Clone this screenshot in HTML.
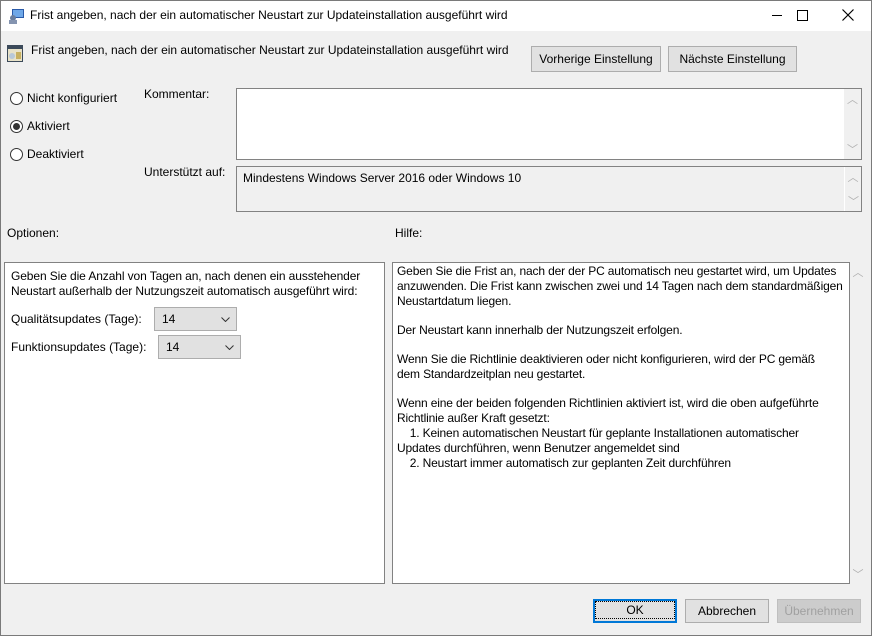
<!DOCTYPE html>
<html><head><meta charset="utf-8"><style>
*{box-sizing:border-box;margin:0;padding:0}
body{width:872px;height:636px;background:#f0f0f0;font-family:"Liberation Sans",sans-serif;font-size:12px;color:#000;position:relative;overflow:hidden}
.frame{position:absolute;left:0;top:0;width:872px;height:636px;border:1px solid #7a7a7a;pointer-events:none}
.a{position:absolute}
.title{left:0;top:0;width:872px;height:31px;background:#fff}
.btn{position:absolute;background:#e1e1e1;border:1px solid #adadad;text-align:center;line-height:24px;font-size:12px}
.box{position:absolute;border:1px solid #828282;background:#fff}
.sb{position:absolute;right:0;top:0;bottom:0;width:17px;background:#f0f0f0;color:#b0b0b0;font-size:11px;text-align:center}
.radio{position:absolute;width:13px;height:13px;border:1px solid #333;border-radius:50%;background:#fff}
.combo{position:absolute;height:24px;background:#e1e1e1;border:1px solid #adadad;padding-left:7px;line-height:22px}
.help div{line-height:15px;white-space:nowrap;letter-spacing:-0.15px}
</style></head><body>
<div class="a title"></div>
<svg class="a" style="left:8px;top:8px" width="17" height="16"><rect x="4" y="1" width="12" height="9" fill="#2a5aa8"/><rect x="5" y="2" width="10" height="7" fill="#6fa8e8"/><circle cx="5" cy="10" r="3" fill="#6a7fa0"/><rect x="1" y="12" width="8" height="4" fill="#8494b0"/></svg>
<div class="a" style="left:30px;top:8px">Frist angeben, nach der ein automatischer Neustart zur Updateinstallation ausgeführt wird</div>
<div class="a" style="left:772px;top:15px;width:10px;height:1px;background:#000"></div>
<div class="a" style="left:797px;top:10px;width:11px;height:11px;border:1px solid #000"></div>
<svg class="a" style="left:842px;top:9px" width="12" height="12"><path d="M0.5 0.5L11.5 11.5M11.5 0.5L0.5 11.5" stroke="#000" stroke-width="1.2"/></svg>
<svg class="a" style="left:7px;top:45px" width="16" height="17"><rect x="0" y="0" width="16" height="17" fill="#3c4a5a"/><rect x="1" y="4" width="14" height="12" fill="#e8e2c8"/><circle cx="5" cy="11" r="3" fill="#b8c8d8"/><rect x="9" y="7" width="5" height="7" fill="#c8b060"/></svg>
<div class="a" style="left:31px;top:43px">Frist angeben, nach der ein automatischer Neustart zur Updateinstallation ausgeführt wird</div>
<div class="btn" style="left:531px;top:46px;width:130px;height:26px">Vorherige Einstellung</div>
<div class="btn" style="left:668px;top:46px;width:129px;height:26px">Nächste Einstellung</div>
<div class="radio" style="left:10px;top:92px"></div>
<div class="a" style="left:27px;top:91px">Nicht konfiguriert</div>
<div class="radio" style="left:10px;top:120px"><div style="position:absolute;left:2px;top:2px;width:7px;height:7px;border-radius:50%;background:#333"></div></div>
<div class="a" style="left:27px;top:119px">Aktiviert</div>
<div class="radio" style="left:10px;top:148px"></div>
<div class="a" style="left:27px;top:147px">Deaktiviert</div>
<div class="a" style="left:144px;top:87px">Kommentar:</div>
<div class="box" style="left:236px;top:88px;width:626px;height:72px"><div class="sb"><div style="margin-top:2px">︿</div><div style="position:absolute;bottom:2px;width:17px">﹀</div></div></div>
<div class="a" style="left:144px;top:165px">Unterstützt auf:</div>
<div class="box" style="left:236px;top:166px;width:626px;height:46px;background:#f0f0f0"><div style="position:absolute;left:6px;top:4px">Mindestens Windows Server 2016 oder Windows 10</div><div class="sb" style="border-left:1px solid #fff"><div style="margin-top:2px">︿</div><div style="position:absolute;bottom:2px;width:17px">﹀</div></div></div>
<div class="a" style="left:7px;top:226px">Optionen:</div>
<div class="a" style="left:395px;top:226px">Hilfe:</div>
<div class="box" style="left:4px;top:262px;width:381px;height:322px">
<div style="position:absolute;left:6px;top:6px;line-height:15px;white-space:nowrap;letter-spacing:-0.1px">Geben Sie die Anzahl von Tagen an, nach denen ein ausstehender<br>Neustart außerhalb der Nutzungszeit automatisch ausgeführt wird:</div>
<div style="position:absolute;left:6px;top:49px">Qualitätsupdates (Tage):</div>
<div style="position:absolute;left:6px;top:77px">Funktionsupdates (Tage):</div>
</div>
<div class="combo" style="left:154px;top:307px;width:83px">14<svg style="position:absolute;right:6px;top:9px" width="9" height="5"><path d="M0.5 0.5L4.5 4.5L8.5 0.5" stroke="#333" fill="none"/></svg></div>
<div class="combo" style="left:158px;top:335px;width:83px">14<svg style="position:absolute;right:6px;top:9px" width="9" height="5"><path d="M0.5 0.5L4.5 4.5L8.5 0.5" stroke="#333" fill="none"/></svg></div>
<div class="box help" style="left:392px;top:262px;width:458px;height:322px;padding:1px 0 0 4px">
<div>Geben Sie die Frist an, nach der der PC automatisch neu gestartet wird, um Updates<br>anzuwenden. Die Frist kann zwischen zwei und 14 Tagen nach dem standardmäßigen<br>Neustartdatum liegen.</div><br>
<div>Der Neustart kann innerhalb der Nutzungszeit erfolgen.</div><br>
<div>Wenn Sie die Richtlinie deaktivieren oder nicht konfigurieren, wird der PC gemäß<br>dem Standardzeitplan neu gestartet.</div><br>
<div>Wenn eine der beiden folgenden Richtlinien aktiviert ist, wird die oben aufgeführte<br>Richtlinie außer Kraft gesetzt:<br>&nbsp;&nbsp;&nbsp;&nbsp;1. Keinen automatischen Neustart für geplante Installationen automatischer<br>Updates durchführen, wenn Benutzer angemeldet sind<br>&nbsp;&nbsp;&nbsp;&nbsp;2. Neustart immer automatisch zur geplanten Zeit durchführen</div>
</div>
<div class="a" style="left:850px;top:262px;width:16px;height:322px;color:#b0b0b0;font-size:11px;text-align:center"><div style="margin-top:2px">︿</div><div style="position:absolute;bottom:2px;width:16px">﹀</div></div>
<div class="btn" style="left:593px;top:599px;width:84px;height:24px;border:2px solid #0078d7;line-height:20px"><div style="border:1px dotted #000;height:18px;line-height:16px;margin:0">OK</div></div>
<div class="btn" style="left:685px;top:599px;width:84px;height:24px;line-height:22px">Abbrechen</div>
<div class="btn" style="left:777px;top:599px;width:84px;height:24px;line-height:22px;background:#cccccc;border-color:#bfbfbf;color:#a0a0a0">Übernehmen</div>
<div class="frame"></div>
</body></html>
